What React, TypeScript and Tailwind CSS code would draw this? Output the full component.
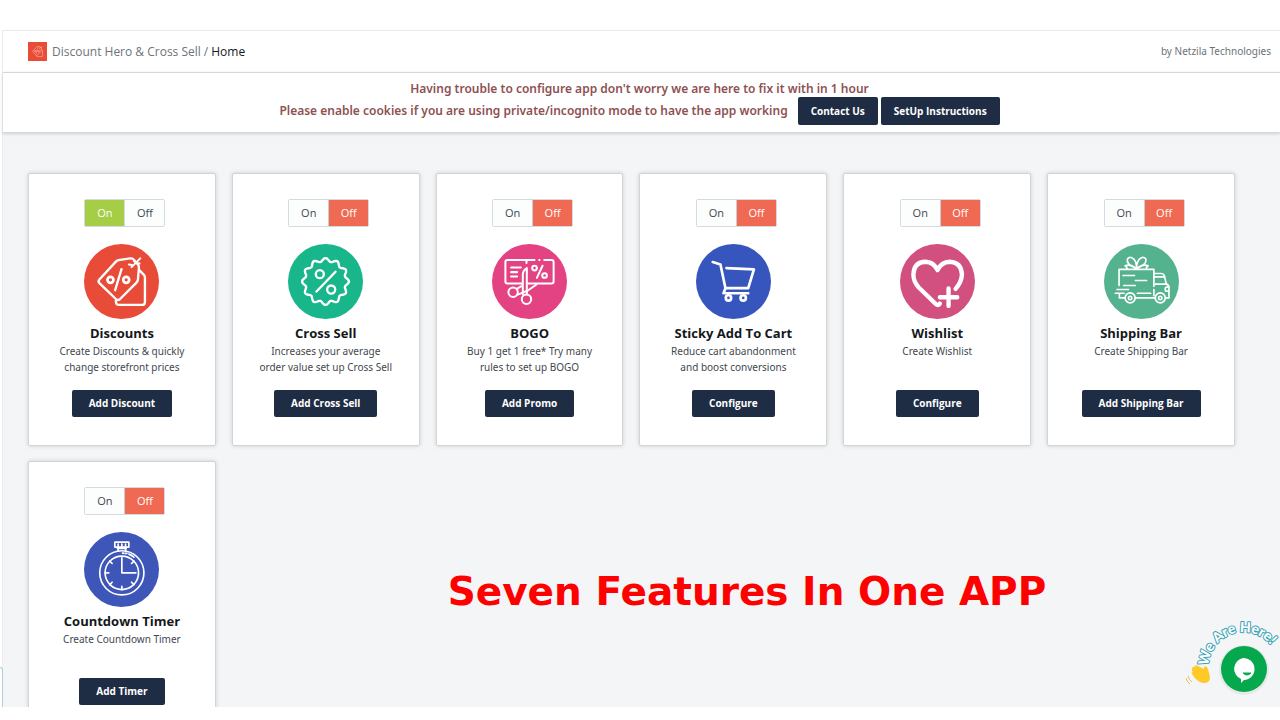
import React, { useState } from 'react';

type Feature = {
    title: string;
    lines: string[];
    action: string;
    color: string;
    enabled: boolean;
    icon: React.ReactNode;
};

// --- badge outline with 12 soft bumps ---
const badgePath = (() => {
    const points: string[] = [];
    for (let i = 0; i < 144; i++) {
        const a = (i / 144) * Math.PI * 2;
        const r = 65 + 5 * Math.cos(a * 12);
        points.push(`${(112 + r * Math.sin(a)).toFixed(1)} ${(112 - r * Math.cos(a)).toFixed(1)}`);
    }
    return `M${points.join('L')}Z`;
})();

const TagIcon = () => (
    <g strokeWidth="7">
        <path d="M96 52 Q99 49 103 48 L138 43 Q145 42 149 47 L161 61 Q165 66 164 72 L161 107 Q160 112 156 116 L107 165 Q101 170 96 165 L46 117 Q41 112 46 106 Z" />
        <path d="M166 79 L179 92 Q182 95 182 99 V173 Q182 182 173 182 H106 Q95 182 95 170" />
        <path d="M168 43 L142 69 M134 61 L143 63 M149 50 L156 57 L166 58" strokeWidth="6" />
        <circle cx="79" cy="107" r="9" strokeWidth="8" />
        <circle cx="126" cy="107" r="9" strokeWidth="8" />
        <path d="M112 75 L93 138" />
    </g>
);

const BadgeIcon = () => (
    <g strokeWidth="7">
        <path d={badgePath} />
        <circle cx="95" cy="90" r="12" />
        <circle cx="129" cy="136" r="12" />
        <path d="M142 83 L85 142" />
    </g>
);

const CouponIcon = () => (
    <g strokeWidth="6">
        <path d="M127 48 H46 Q40 48 40 54 V112 Q40 118 46 118 H88 M108 118 H178 Q184 118 184 112 V54 Q184 48 178 48 H156 M141 48 H142 M103 49 V57" />
        <path d="M57 70 H86 M57 84 H75 M57 97 H75" />
        <path d="M104 151 V72 Q92 80 92 91 V151" />
        <path d="M133 121 L107 139 L77 151 M88 126 L74 134" />
        <circle cx="103" cy="165" r="14" />
        <circle cx="63" cy="144" r="14" />
        <circle cx="127" cy="72" r="7" />
        <circle cx="157" cy="94" r="7" />
        <path d="M151 65 L134 101" />
    </g>
);

const CartIcon = () => (
    <g strokeWidth="8">
        <path d="M50 54 L73 61 L88 132 H156 L173 76 L91 72" />
        <path d="M88 132 L82 147 H156" />
        <circle cx="97" cy="161" r="8" />
        <circle cx="141" cy="161" r="8" />
    </g>
);

const HeartIcon = () => (
    <g strokeWidth="13">
        <path d="M119 178 Q114 186 107 179 L56 130 Q40 112 40 92 Q41 54 76 53 Q101 54 112 78 Q123 54 149 53 Q183 55 185 91 Q184 114 166 134" />
        <path d="M145 133 V185 M119 159 H171" />
    </g>
);

const TruckIcon = () => (
    <g strokeWidth="5">
        <path d="M45 124 V76 H149 V126 M149 136 V154" />
        <path d="M57 94 H91 M94 109 H127 M59 124 H93 M39 136 H73 M34 147 H60 M46 149 V161 H62 M96 161 H150 M100 147 H139" />
        <path d="M151 88 H171 Q178 88 180 94 L186 119 Q194 122 194 130 V161 H184" />
        <path d="M151 98 H180 M153 120 H186 M193 129 H187 Q183 129 183 135 Q183 141 187 141 H193" />
        <circle cx="78" cy="161" r="15" />
        <circle cx="78" cy="161" r="5" />
        <circle cx="168" cy="161" r="15" />
        <circle cx="168" cy="161" r="5" />
        <path d="M97 73 Q65 61 70 45 Q77 35 89 45 Q98 56 97 73 Q97 56 106 45 Q118 35 125 45 Q129 61 97 73" />
        <path d="M97 73 Q78 59 63 65 Q70 69 68 75 M97 73 Q117 59 132 65 Q125 69 127 75" />
    </g>
);

const TimerIcon = () => (
    <g strokeWidth="5">
        <circle cx="113" cy="122" r="66" />
        <circle cx="113" cy="122" r="50" />
        <rect x="92" y="30" width="42" height="15" rx="1" />
        <path d="M102 36 V57 M113 36 V45 M124 36 V57 M100 49 H126" />
        <path d="M113 77 V122 H155" />
        <path d="M113 162 V172 M63 122 H74 M77 87 L84 94 M149 87 L142 94 M77 157 L84 150 M149 157 L142 150" />
        <path d="M115 63 H119 M124 64 H128 M134 66 Q142 69 149 75" />
    </g>
);

const features: Feature[] = [
    { title: 'Discounts', lines: ['Create Discounts & quickly', 'change storefront prices'], action: 'Add Discount', color: '#e84c38', enabled: true, icon: <TagIcon /> },
    { title: 'Cross Sell', lines: ['Increases your average', 'order value set up Cross Sell'], action: 'Add Cross Sell', color: '#19b68b', enabled: false, icon: <BadgeIcon /> },
    { title: 'BOGO', lines: ['Buy 1 get 1 free* Try many', 'rules to set up BOGO'], action: 'Add Promo', color: '#e34283', enabled: false, icon: <CouponIcon /> },
    { title: 'Sticky Add To Cart', lines: ['Reduce cart abandonment', 'and boost conversions'], action: 'Configure', color: '#3655bd', enabled: false, icon: <CartIcon /> },
    { title: 'Wishlist', lines: ['Create Wishlist'], action: 'Configure', color: '#d25080', enabled: false, icon: <HeartIcon /> },
    { title: 'Shipping Bar', lines: ['Create Shipping Bar'], action: 'Add Shipping Bar', color: '#55b28e', enabled: false, icon: <TruckIcon /> },
    { title: 'Countdown Timer', lines: ['Create Countdown Timer'], action: 'Add Timer', color: '#3d56b8', enabled: false, icon: <TimerIcon /> },
];

const FeatureCard: React.FC<{ feature: Feature }> = ({ feature }) => {
    const [enabled, setEnabled] = useState<boolean>(feature.enabled);

    return (
        <section className="flex flex-col items-center rounded-xs border border-[#d3d4d5] bg-white pt-[25px] pb-7 text-center shadow-[0_0_4px_rgba(0,0,0,0.16)]">
            {/* On / Off switch */}
            <div className="ml-1.5 flex h-7 rounded-xs border border-[#d3dae2] text-[11px]" role="group" aria-label={feature.title}>
                <button
                    onClick={() => setEnabled(true)}
                    aria-pressed={enabled}
                    className={enabled ? 'w-[39px] bg-[#a5cd45] text-white' : 'w-[39px] bg-[#fcfdfd] text-[#41484f]'}
                >
                    On
                </button>
                <button
                    onClick={() => setEnabled(false)}
                    aria-pressed={!enabled}
                    className={enabled ? 'w-10 border-l border-[#d3dae2] bg-[#fcfdfd] text-[#41484f]' : 'w-10 border-l border-[#c4ccd6] bg-[#f06952] text-white'}
                >
                    Off
                </button>
            </div>

            <svg viewBox="0 0 224 224" className="mt-[17px] size-[75px]" fill="none" stroke="#fff" strokeLinecap="round" strokeLinejoin="round" aria-hidden="true">
                <circle cx="112" cy="112" r="112" fill={feature.color} stroke="none" />
                {feature.icon}
            </svg>

            <h2 className="mt-1 text-[13px] leading-5 font-bold whitespace-nowrap text-[#14181d]">{feature.title}</h2>
            <p className="min-h-8 font-['Noto_Sans',sans-serif] text-[10px] leading-4 whitespace-nowrap text-[#41484f]">
                {feature.lines.map((line) => (
                    <span key={line} className="block">{line}</span>
                ))}
            </p>
            <button className="mt-[15px] h-[27px] rounded-xs bg-[#1f2d44] px-[17px] text-[10px] font-bold whitespace-nowrap text-white hover:bg-[#2b3c58]">
                {feature.action}
            </button>
        </section>
    );
};

const ChatWidget = () => (
    <button className="absolute right-0 bottom-0 h-[100px] w-[96px]" aria-label="We Are Here! Open chat">
        <svg viewBox="0 0 96 100" className="size-full overflow-hidden">
            <defs>
                <path id="chat-arc" d="M25 66 A35 35 0 1 1 94 66" />
            </defs>
            <circle cx="60" cy="63" r="25" fill="#000" opacity="0.05" />
            <circle cx="60" cy="62" r="23" fill="#06a84e" />
            <path d="M59 51 a11 11 0 0 1 1 22 L57 76 V72 A11 11 0 0 1 59 51 Z" fill="#fff" />
            <path d="M59 66 Q63 70 67 66 Z" fill="#06a84e" stroke="#06a84e" />
            <text className="font-['Lato'] text-[14px] font-black [paint-order:stroke]" fill="#fff" stroke="#3ba3b3" strokeWidth="2" strokeLinejoin="round">
                <textPath href="#chat-arc" startOffset="7">We Are Here!</textPath>
            </text>
            {/* waving hand */}
            <path d="M8 62 Q8 59 11 60 Q10 57 14 59 L20 62 L20 60 Q22 58 24 62 L26 70 Q26 76 20 76 Q15 76 10 70 L8 67 Q7 65 9 65 Q7 64 8 62 Z" fill="#ffc928" />
            <path d="M4 69 Q5 73 8 75 M2 71 Q3 75 6 77" fill="none" stroke="#e8bd55" />
        </svg>
    </button>
);

const App: React.FC = () => {
    return (
        <div className="flex h-screen flex-col overflow-hidden bg-white pt-[30px] pb-[13px] font-['Open_Sans','Noto_Sans',sans-serif]">
            <div className="relative flex min-h-0 flex-1 flex-col pl-0.5">
                <div className="flex min-h-0 flex-1 flex-col border-t border-l border-[#e9ebed] bg-[#f4f5f7]">
                    {/* Topbar */}
                    <header className="flex h-[41px] shrink-0 items-center justify-between bg-white pr-[9px] pl-[25px] text-[#6d7379]">
                        <div className="flex items-center gap-[5px] text-xs">
                            <svg viewBox="0 0 224 224" className="size-[19px] bg-[#e94c36]" fill="none" stroke="#ffc9be" strokeLinecap="round" aria-hidden="true">
                                <g transform="translate(17 17) scale(0.85)">
                                    <TagIcon />
                                </g>
                            </svg>
                            <nav className="flex gap-[3px]" aria-label="Breadcrumb">
                                <a href="#app" className="hover:underline">Discount Hero &amp; Cross Sell</a>
                                <span>/</span>
                                <span className="text-[#17191c]">Home</span>
                            </nav>
                        </div>
                        <span className="font-['Noto_Sans',sans-serif] text-[10px]">by Netzila Technologies</span>
                    </header>

                    {/* Notice */}
                    <div className="flex h-[61px] shrink-0 flex-col items-center border-y border-[#d5d7d9] bg-white pt-2 pr-1 font-semibold shadow-[0_1px_3px_rgba(0,0,0,0.15)]">
                        <p className="font-['Noto_Sans',sans-serif] text-xs leading-4 text-[#8e5152]">Having trouble to configure app don't worry we are here to fix it with in 1 hour</p>
                        <div className="flex items-center">
                            <p className="mr-2.5 font-['Noto_Sans',sans-serif] text-xs text-[#8e5152]">Please enable cookies if you are using private/incognito mode to have the app working</p>
                            <button className="h-7 rounded-xs bg-[#1f2d44] px-[13px] text-[10px] font-bold text-white hover:bg-[#2b3c58]">Contact Us</button>
                            <button className="ml-[3px] h-7 rounded-xs bg-[#1f2d44] px-[13px] text-[10px] font-bold text-white hover:bg-[#2b3c58]">SetUp Instructions</button>
                        </div>
                    </div>

                    {/* Features */}
                    <main className="min-h-0 flex-1 overflow-hidden pt-10 pr-[45px] pl-[25px]">
                        <div className="grid grid-cols-6 gap-x-4 gap-y-[15px]">
                            {features.map((feature) => (
                                <FeatureCard key={feature.title} feature={feature} />
                            ))}
                            <h1 className="col-span-4 col-start-3 pt-[107px] pl-3 font-['DejaVu_Sans',sans-serif] text-[39px] leading-[48px] font-bold whitespace-nowrap text-[#ff0000]">
                                Seven Features In One APP
                            </h1>
                        </div>
                    </main>
                </div>

                {/* edge of the collapsed side tab */}
                <div className="absolute bottom-0 left-0 h-10 w-[3px] rounded-tr-sm border-t border-r border-[#a9d3d8] bg-white" />
                <ChatWidget />
            </div>
        </div>
    );
};

export default App;
